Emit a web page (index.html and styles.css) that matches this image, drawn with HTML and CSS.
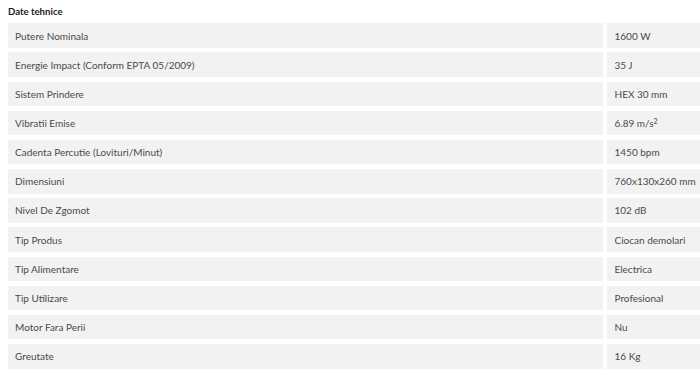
FILE: index.html
```html
<!DOCTYPE html>
<html>
<head>
<meta charset="utf-8">
<link rel="stylesheet" href="styles.css">
</head>
<body>
<h3 class="title">Date tehnice</h3>
<div class="specs">
  <div class="cell name">Putere Nominala</div><div class="cell val">1600 W</div>
  <div class="cell name">Energie Impact (Conform EPTA 05/2009)</div><div class="cell val">35 J</div>
  <div class="cell name">Sistem Prindere</div><div class="cell val">HEX 30 mm</div>
  <div class="cell name">Vibratii Emise</div><div class="cell val">6.89 m/s<sup>2</sup></div>
  <div class="cell name">Cadenta Percutie (Lovituri/Minut)</div><div class="cell val">1450 bpm</div>
  <div class="cell name">Dimensiuni</div><div class="cell val">760x130x260 mm</div>
  <div class="cell name">Nivel De Zgomot</div><div class="cell val">102 dB</div>
  <div class="cell name">Tip Produs</div><div class="cell val">Ciocan demolari</div>
  <div class="cell name">Tip Alimentare</div><div class="cell val">Electrica</div>
  <div class="cell name">Tip Utilizare</div><div class="cell val">Profesional</div>
  <div class="cell name">Motor Fara Perii</div><div class="cell val">Nu</div>
  <div class="cell name">Greutate</div><div class="cell val">16 Kg</div>
</div>
</body>
</html>
```

FILE: styles.css
```css
html, body { margin: 0; padding: 0; background: #fff; }
body {
  padding: 0 0 0 8px;
  font-family: Lato, "Open Sans", sans-serif;
  color: #444;
  overflow: hidden;
}
.title {
  margin: 0;
  padding-top: 6px;
  height: 17.3px;
  font-size: 9.6px;
  font-weight: 700;
  color: #222;
  line-height: 12px;
}
.specs {
  display: grid;
  grid-template-columns: 595px 1fr;
  column-gap: 4px;
  row-gap: 4.67px;
}
.cell {
  background: #f2f2f2;
  height: 24.5px;
  display: flex;
  align-items: center;
  padding-left: 7px;
  font-size: 10px;
  color: #4a4a4a;
  box-sizing: border-box;
}
.val { padding-left: 7.5px; }
sup { font-size: 7px; line-height: 0; position: relative; top: -2px; }
```
